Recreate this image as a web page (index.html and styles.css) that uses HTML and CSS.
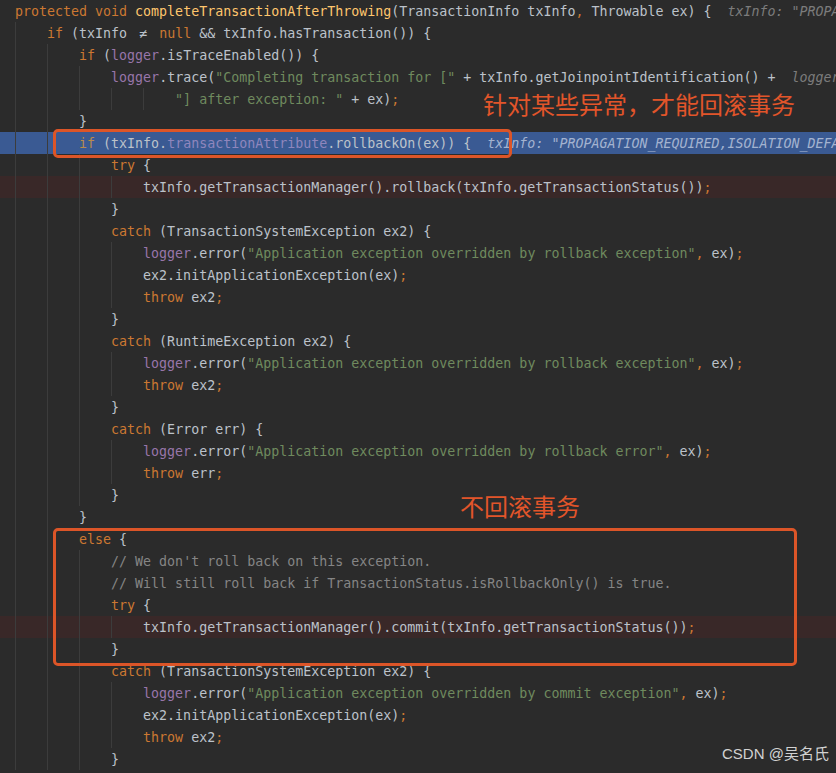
FILE: index.html
```html
<!DOCTYPE html>
<html>
<head>
    <meta charset="UTF-8">
    <title>completeTransactionAfterThrowing</title>
    <link rel="stylesheet" href="styles.css">
</head>
<body>
<div class="editor">
    <div class="ln"><span class="k">protected void</span> <span class="m">completeTransactionAfterThrowing</span>(TransactionInfo txInfo<span class="k">,</span> Throwable ex) {  <span class="h">txInfo: "PROPAGATION_REQUIRED,ISOLATION_DEFAULT"</span></div>
    <div class="ln"><span class="ind">    </span><span class="k">if</span> (txInfo <span class="lig">≠</span> <span class="k">null</span> &amp;&amp; txInfo.hasTransaction()) {</div>
    <div class="ln"><span class="ind">        </span><span class="k">if</span> (<span class="f">logger</span>.isTraceEnabled()) {</div>
    <div class="ln"><span class="ind">            </span><span class="f">logger</span>.trace(<span class="s">"Completing transaction for ["</span> + txInfo.getJoinpointIdentification() +  <span class="h">logger: LogAdapter$Slf4jLocationAwareLog</span></div>
    <div class="ln"><span class="ind">                    </span><span class="s">"] after exception: "</span> + ex)<span class="k">;</span></div>
    <div class="ln"><span class="ind">        </span>}</div>
    <div class="ln hl"><span class="ind">        </span><span class="k">if</span> (txInfo.<span class="f">transactionAttribute</span>.rollbackOn(ex)) {  <span class="h">txInfo: "PROPAGATION_REQUIRED,ISOLATION_DEFAULT"</span></div>
    <div class="ln"><span class="ind">            </span><span class="k">try</span> {</div>
    <div class="ln bp"><span class="ind">                </span>txInfo.getTransactionManager().rollback(txInfo.getTransactionStatus())<span class="k">;</span></div>
    <div class="ln"><span class="ind">            </span>}</div>
    <div class="ln"><span class="ind">            </span><span class="k">catch</span> (TransactionSystemException ex2) {</div>
    <div class="ln"><span class="ind">                </span><span class="f">logger</span>.error(<span class="s">"Application exception overridden by rollback exception"</span><span class="k">,</span> ex)<span class="k">;</span></div>
    <div class="ln"><span class="ind">                </span>ex2.initApplicationException(ex)<span class="k">;</span></div>
    <div class="ln"><span class="ind">                </span><span class="k">throw</span> ex2<span class="k">;</span></div>
    <div class="ln"><span class="ind">            </span>}</div>
    <div class="ln"><span class="ind">            </span><span class="k">catch</span> (RuntimeException ex2) {</div>
    <div class="ln"><span class="ind">                </span><span class="f">logger</span>.error(<span class="s">"Application exception overridden by rollback exception"</span><span class="k">,</span> ex)<span class="k">;</span></div>
    <div class="ln"><span class="ind">                </span><span class="k">throw</span> ex2<span class="k">;</span></div>
    <div class="ln"><span class="ind">            </span>}</div>
    <div class="ln"><span class="ind">            </span><span class="k">catch</span> (Error err) {</div>
    <div class="ln"><span class="ind">                </span><span class="f">logger</span>.error(<span class="s">"Application exception overridden by rollback error"</span><span class="k">,</span> ex)<span class="k">;</span></div>
    <div class="ln"><span class="ind">                </span><span class="k">throw</span> err<span class="k">;</span></div>
    <div class="ln"><span class="ind">            </span>}</div>
    <div class="ln"><span class="ind">        </span>}</div>
    <div class="ln"><span class="ind">        </span><span class="k">else</span> {</div>
    <div class="ln"><span class="ind">            </span><span class="c">// We don't roll back on this exception.</span></div>
    <div class="ln"><span class="ind">            </span><span class="c">// Will still roll back if TransactionStatus.isRollbackOnly() is true.</span></div>
    <div class="ln"><span class="ind">            </span><span class="k">try</span> {</div>
    <div class="ln bp"><span class="ind">                </span>txInfo.getTransactionManager().commit(txInfo.getTransactionStatus())<span class="k">;</span></div>
    <div class="ln"><span class="ind">            </span>}</div>
    <div class="ln"><span class="ind">            </span><span class="k">catch</span> (TransactionSystemException ex2) {</div>
    <div class="ln"><span class="ind">                </span><span class="f">logger</span>.error(<span class="s">"Application exception overridden by commit exception"</span><span class="k">,</span> ex)<span class="k">;</span></div>
    <div class="ln"><span class="ind">                </span>ex2.initApplicationException(ex)<span class="k">;</span></div>
    <div class="ln"><span class="ind">                </span><span class="k">throw</span> ex2<span class="k">;</span></div>
    <div class="ln"><span class="ind">            </span>}</div>
</div>

<!-- 标注 -->
<div class="mark mark-rollback"></div>
<div class="mark mark-else"></div>
<p class="note note-rollback">针对某些异常，才能回滚事务</p>
<p class="note note-else">不回滚事务</p>
<p class="wm">CSDN @吴名氏</p>
</body>
</html>
```

FILE: styles.css
```css
* {
    margin: 0;
    padding: 0;
}

body {
    position: relative;
    width: 836px;
    height: 773px;
    overflow: hidden;
    background: #2b2b2b;
    font-family: "DejaVu Sans Mono", "Liberation Mono", monospace;
}

.ln {
    height: 22px;
    padding-left: 15px;
    line-height: 24px;
    font-size: 13.3px;
    color: #bcc2ca;
    white-space: pre;
    overflow: hidden;
}

.ln .ind {
    display: inline-block;
    height: 22px;
    vertical-align: top;
    background: repeating-linear-gradient(to right, #3c3c3c 0 1px, transparent 1px 32px);
}

.ln.hl {
    background: #3a5a93;
}

.ln.bp {
    background: #392828;
}

.k { color: #cc7832; }
.m { color: #ffc66d; }
.s { color: #6f8a5e; }
.c { color: #858585; }
.f { color: #9876aa; }

.h {
    color: #7c7c7c;
    font-style: italic;
}

.hl .k { color: #b88a4e; }
.hl .f { color: #8f86bd; }
.hl .h { color: #a3b3d0; }

.lig {
    display: inline-block;
    width: 16px;
    text-align: center;
}

.mark {
    position: absolute;
    border: 3px solid #dc5528;
    border-radius: 5px;
}

.mark-rollback {
    left: 53px;
    top: 129px;
    width: 453px;
    height: 23px;
}

.mark-else {
    left: 53px;
    top: 528px;
    width: 738px;
    height: 132px;
}

.note {
    position: absolute;
    font-family: "Noto Sans CJK SC", sans-serif;
    font-size: 24px;
    line-height: 30px;
    color: #e2552a;
}

.note-rollback {
    left: 483px;
    top: 89px;
}

.note-else {
    left: 460px;
    top: 491px;
}

.wm {
    position: absolute;
    left: 722px;
    top: 744px;
    font-family: "Liberation Sans", "Noto Sans CJK SC", sans-serif;
    font-size: 15px;
    line-height: 20px;
    color: #d2d2d2;
}
```
